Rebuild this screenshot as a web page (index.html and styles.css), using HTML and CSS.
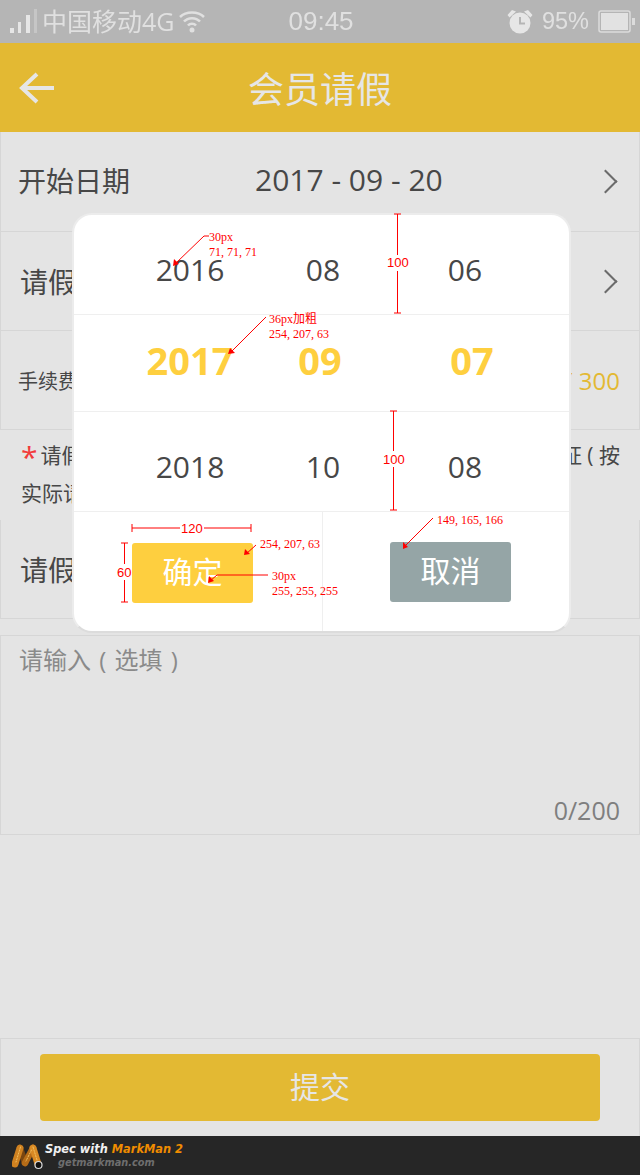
FILE: index.html
```html
<!DOCTYPE html>
<html lang="en">
<head>
    <meta charset="UTF-8">
    <meta name="viewport" content="width=device-width, initial-scale=1.0">
    <title>会员请假</title>
    <link rel="stylesheet" href="styles.css">
</head>
<body>
<div class="page">
    <div class="statusBar">
        <svg class="signalIcon" width="30" height="26" viewBox="0 0 30 26">
            <rect x="1" y="19" width="4" height="5" fill="#e6e6e6" />
            <rect x="9" y="13" width="3" height="11" fill="#e6e6e6" />
            <rect x="17" y="6" width="4" height="18" fill="#e6e6e6" />
            <rect x="25" y="0" width="3" height="24" fill="#c6c6c6" />
        </svg>
        <span class="carrier">中国移动4G</span>
        <svg class="wifiIcon" width="26" height="24" viewBox="0 0 26 24" fill="none" stroke="#e0e0e0" stroke-width="2.500">
            <path d="M1 7 C7 1 19 1 25 7" />
            <path d="M5 11.500 C9 7 17 7 21 11.500" />
            <path d="M9 15.500 C11 13 15 13 17 15.500" />
            <circle cx="13" cy="20" r="2.500" fill="#e0e0e0" stroke="none" />
        </svg>
        <span class="clock">09:45</span>
        <div class="statusRight">
            <svg width="26" height="26" viewBox="0 0 26 26">
                <circle cx="13" cy="14" r="10.500" fill="#e6e6e6" />
                <path d="M0.500 6 L5 1 L9 2.500 L2.500 8.500 Z M25.500 6 L21 1 L17 2.500 L23.500 8.500 Z" fill="#e6e6e6" />
                <path d="M13 8 V14.500 H18" fill="none" stroke="#b5b5b5" stroke-width="2" />
            </svg>
            <span class="battery">95%</span>
            <svg width="37" height="24" viewBox="0 0 37 24">
                <rect x="1" y="1" width="31" height="21" rx="2" fill="none" stroke="#dcdcdc" stroke-width="1.500" />
                <rect x="3" y="3" width="27" height="17" fill="#e2e2e2" />
                <rect x="34" y="8" width="3" height="7" fill="#dcdcdc" />
            </svg>
        </div>
    </div>

    <div class="header">
        <svg class="backIcon" width="36" height="32" viewBox="0 0 36 32" fill="none" stroke="#e6e6e6" stroke-width="4">
            <path d="M18 2 L3 16 L18 30" />
            <path d="M3 16 H35" />
        </svg>
        <span class="headerTitle">会员请假</span>
    </div>

    <div class="formRow rowTall">
        <span class="rowLabel">开始日期</span>
        <span class="rowDate">2017 - 09 - 20</span>
        <span class="chevron"></span>
    </div>
    <div class="formRow">
        <span class="rowLabel rowLabelAlt">请假</span>
        <span class="chevron"></span>
    </div>
    <div class="formRow">
        <span class="feeLabel">手续费</span>
        <span class="feeValue"><span class="feeSign">¥</span>300</span>
    </div>
    <div class="noteBox">
        <div class="noteLine">
            <span><span class="star">*</span>请假</span>
            <span>证 ( 按</span>
        </div>
        <div class="noteLine">实际请</div>
    </div>
    <div class="formRow">
        <span class="rowLabel rowLabelAlt">请假</span>
    </div>
    <div class="textBox">
        <span class="placeholder">请输入 ( 选填 )</span>
        <span class="counter">0/200</span>
    </div>
    <div class="submitBar">
        <div class="submitBtn">提交</div>
    </div>
    <div class="markmanBar">
        <svg width="32" height="28" viewBox="0 0 32 28" fill="none" stroke-linecap="round">
            <path d="M8 6 L13 21" stroke="#7a4610" stroke-width="6.500" />
            <path d="M21 6 L13 21" stroke="#b56c18" stroke-width="6.500" />
            <path d="M8 6 L3 22" stroke="#cf8120" stroke-width="7" />
            <path d="M21 6 L26 22" stroke="#d98a24" stroke-width="7" />
            <path d="M8.500 5 L4 20 M21 5 L25 18 M19.500 8 L14 19" stroke="#f2c060" stroke-width="1" stroke-dasharray="1.500 1.500" />
            <circle cx="26.500" cy="23" r="3.500" fill="#111" stroke="#ddd" stroke-width="1.200" />
        </svg>
        <div class="markmanText">
            <div class="markmanTitle">Spec with <span class="markmanName">MarkMan 2</span></div>
            <div class="markmanUrl">getmarkman.com</div>
        </div>
    </div>

    <div class="dateModal">
        <div class="pickRow pickPlain">
            <span class="pickCell">2016</span>
            <span class="pickCell">08</span>
            <span class="pickCell">06</span>
        </div>
        <div class="pickRow pickActive">
            <span class="pickCell">2017</span>
            <span class="pickCell">09</span>
            <span class="pickCell">07</span>
        </div>
        <div class="pickRow pickPlain">
            <span class="pickCell">2018</span>
            <span class="pickCell">10</span>
            <span class="pickCell">08</span>
        </div>
        <div class="modalActions">
            <div class="actionCell"><div class="modalBtn btnOk">确定</div></div>
            <div class="actionCell"><div class="modalBtn btnCancel">取消</div></div>
        </div>
    </div>

    <!-- spec annotations drawn over the mockup -->
    <svg class="specLayer" width="640" height="1175" viewBox="0 0 640 1175">
        <g class="specLines">
            <path d="M209 236 H204 L175 264" />
            <path d="M266 317 L230 353" />
            <path d="M394 214 H401 M397.500 214 V255 M397.500 271 V313 M394 313 H401" />
            <path d="M390 411 H397 M393.500 411 V451 M393.500 467 V510 M390 510 H397" />
            <path d="M132 524 V532 M132 528 H180 M204 528 H251 M251 524 V532" />
            <path d="M121 543 H128 M124.500 543 V564 M124.500 580 V602 M121 602 H128" />
            <path d="M256 545 L246 554" />
            <path d="M268 575 H217 L210 581" />
            <path d="M433 518 L404 547" />
        </g>
        <g class="specArrows">
            <path d="M174 259 L179 264 L173 266 Z" />
            <path d="M230 348 L235 353 L228 354 Z" />
            <path d="M245 549 L250 554 L244 555 Z" />
            <path d="M209 576 L214 581 L208 583 Z" />
            <path d="M403 542 L408 547 L403 549 Z" />
        </g>
        <text class="specText" x="209" y="241">30px</text>
        <text class="specText" x="209" y="256">71, 71, 71</text>
        <text class="specText" x="269" y="323">36px加粗</text>
        <text class="specText" x="269" y="338">254, 207, 63</text>
        <text class="specText" x="260" y="548">254, 207, 63</text>
        <text class="specText" x="272" y="580">30px</text>
        <text class="specText" x="272" y="595">255, 255, 255</text>
        <text class="specText" x="437" y="524">149, 165, 166</text>
        <text class="specNum" x="387" y="267">100</text>
        <text class="specNum" x="383" y="464">100</text>
        <text class="specNum" x="181" y="533">120</text>
        <text class="specNum" x="117" y="577">60</text>
    </svg>
</div>
</body>
</html>
```

FILE: styles.css
```css
* {
    box-sizing: border-box;
}

body {
    margin: 0;
    font-family: "Open Sans", "Noto Sans CJK SC", sans-serif;
    color: #474747;
}

.page {
    position: relative;
    display: flex;
    flex-direction: column;
    width: 640px;
    height: 1175px;
    overflow: hidden;
    background-color: #e4e4e4;
}

/* status bar */
.statusBar {
    display: flex;
    align-items: center;
    height: 43px;
    padding: 0 5px 0 9px;
    background-color: #b5b5b5;
    color: #e0e0e0;
}

.statusBar > * {
    filter: blur(0.4px);
}

.carrier {
    margin-left: 3px;
    font-size: 25px;
    line-height: 43px;
    white-space: nowrap;
}

.wifiIcon {
    margin-left: 5px;
}

.clock {
    margin-left: 83px;
    font-family: "Liberation Sans", sans-serif;
    font-size: 26px;
}

.statusRight {
    display: flex;
    align-items: center;
    gap: 9px;
    margin-left: auto;
}

.battery {
    font-family: "Liberation Sans", sans-serif;
    font-size: 23.500px;
}

/* header */
.header {
    position: relative;
    display: flex;
    align-items: center;
    justify-content: center;
    height: 89px;
    background-color: #e3b933;
}

.backIcon {
    position: absolute;
    left: 19px;
    top: 29px;
}

.headerTitle {
    color: #e6e6e6;
    font-size: 36px;
}

/* form rows */
.formRow {
    position: relative;
    display: flex;
    align-items: center;
    height: 99px;
    padding: 0 19px 0 17px;
    border: 1px solid #d6d6d6;
    border-top: 0;
    flex-shrink: 0;
}

.rowTall {
    height: 100px;
}

.rowLabel {
    position: relative;
    top: -2px;
    font-size: 28px;
}

.rowLabelAlt {
    top: 0;
    margin-left: 2px;
}

.rowDate {
    position: relative;
    top: -2px;
    margin-left: 125px;
    font-size: 30px;
    white-space: nowrap;
}

.chevron {
    position: absolute;
    right: 25px;
    top: 41px;
    width: 17px;
    height: 17px;
    border-top: 2px solid #6b6b6b;
    border-right: 2px solid #6b6b6b;
    transform: rotate(45deg);
}

.feeLabel {
    font-size: 20px;
}

.feeValue {
    margin-left: auto;
    color: #e3b933;
    font-size: 24px;
}

.feeSign {
    margin-right: 6px;
}

.noteBox {
    height: 90px;
    padding: 6px 20px 0 21px;
    font-size: 21px;
    flex-shrink: 0;
}

.noteLine {
    display: flex;
    justify-content: space-between;
    height: 38px;
    line-height: 38px;
}

.star {
    margin-right: 3px;
    color: #f23b3b;
    font-size: 30px;
    line-height: 30px;
    vertical-align: -5px;
}

.textBox {
    position: relative;
    height: 200px;
    margin-top: 16px;
    padding: 5px 18px;
    border: 1px solid #d6d6d6;
    flex-shrink: 0;
}

.placeholder {
    color: #8a8a8a;
    font-size: 24px;
    word-spacing: 2px;
}

.counter {
    position: absolute;
    right: 19px;
    bottom: 7px;
    color: #7f7f7f;
    font-size: 25px;
}

/* bottom */
.submitBar {
    display: flex;
    align-items: center;
    justify-content: center;
    height: 98px;
    margin-top: auto;
    border: 1px solid #d6d6d6;
    border-bottom: 0;
}

.submitBtn {
    width: 560px;
    height: 67px;
    border-radius: 4px;
    background-color: #e3b933;
    color: #e6e6e6;
    font-size: 30px;
    line-height: 66px;
    text-align: center;
}

.markmanBar {
    display: flex;
    align-items: center;
    height: 39px;
    padding-left: 12px;
    background-color: #262626;
    font-family: "DejaVu Sans", sans-serif;
    font-style: italic;
    font-weight: bold;
}

.markmanText {
    margin-left: 1px;
}

.markmanTitle {
    color: #f0f0f0;
    font-size: 11.400px;
    line-height: 15px;
}

.markmanName {
    color: #f08c00;
}

.markmanUrl {
    margin-left: 13px;
    color: #6e6e6e;
    font-size: 9.800px;
    line-height: 12px;
}

/* date picker */
.dateModal {
    position: absolute;
    left: 72px;
    top: 213px;
    display: flex;
    flex-direction: column;
    width: 499px;
    height: 420px;
    border: 2px solid #ececec;
    border-bottom-color: #dcdcdc;
    border-radius: 20px;
    background-color: #fff;
}

.pickRow {
    display: flex;
    align-items: center;
    padding-left: 66px;
    border-bottom: 1px solid #efefef;
    font-size: 30px;
    flex-shrink: 0;
}

.pickCell {
    width: 100px;
    text-align: center;
}

.pickPlain {
    gap: 33px;
    height: 100px;
    padding-top: 10px;
}

.pickPlain .pickCell:last-child {
    margin-left: 9px;
}

.pickActive {
    gap: 30px;
    height: 97px;
    padding-bottom: 6px;
    color: #fecf3f;
    font-size: 38px;
    font-weight: bold;
}

.pickActive .pickCell:last-child {
    margin-left: 22px;
}

.modalActions {
    display: flex;
    flex: 1;
}

.actionCell {
    width: 248px;
    padding: 31px 0 0 58px;
}

.actionCell + .actionCell {
    flex: 1;
    padding: 30px 0 0 67px;
    border-left: 1px solid #efefef;
}

.modalBtn {
    width: 121px;
    height: 60px;
    border-radius: 3px;
    color: #fff;
    font-size: 30px;
    line-height: 58px;
    text-align: center;
}

.btnOk {
    background-color: #fecf3f;
}

.btnCancel {
    background-color: #95a5a6;
}

/* spec annotations */
.specLayer {
    position: absolute;
    left: 0;
    top: 0;
    pointer-events: none;
}

.specLines path {
    fill: none;
    stroke: #f00;
    stroke-width: 1;
}

.specArrows path {
    fill: #f00;
}

.specText {
    fill: #f00;
    font-family: "Liberation Serif", "Noto Sans CJK SC", serif;
    font-size: 12px;
}

.specNum {
    fill: #f00;
    font-family: "Liberation Sans", sans-serif;
    font-size: 13px;
}
```
